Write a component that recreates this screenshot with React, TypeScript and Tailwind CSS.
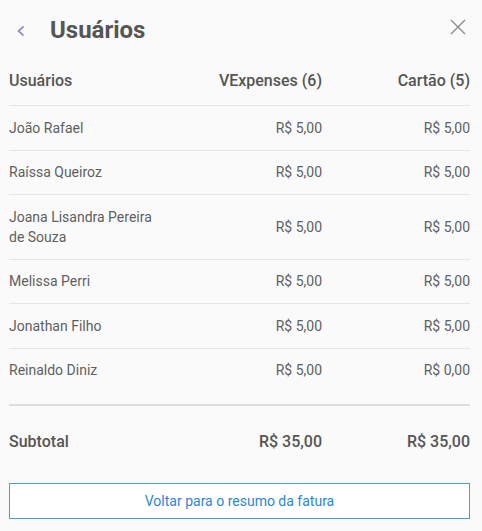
import React from "react";

const rows: { name: string; v: string; c: string }[] = [
  { name: "João Rafael", v: "R$ 5,00", c: "R$ 5,00" },
  { name: "Raíssa Queiroz", v: "R$ 5,00", c: "R$ 5,00" },
  { name: "Joana Lisandra Pereira de Souza", v: "R$ 5,00", c: "R$ 5,00" },
  { name: "Melissa Perri", v: "R$ 5,00", c: "R$ 5,00" },
  { name: "Jonathan Filho", v: "R$ 5,00", c: "R$ 5,00" },
];

export default function App() {
  return (
    <div
      className="w-[482px] h-[531px] bg-[#fafafa] overflow-hidden"
      style={{ fontFamily: "Roboto, 'Liberation Sans', sans-serif" }}
    >
      <div className="flex items-center h-[57px] pl-[14px] pr-[15px]">
        <svg width="14" height="14" viewBox="0 0 14 14" className="mt-[5px]">
          <path d="M9.5 2.5 L4.5 7 L9.5 11.5" fill="none" stroke="#8f91b8" strokeWidth="1.7" />
        </svg>
        <h1 className="ml-[22px] mt-[3px] text-[24px] leading-[28px] font-bold text-[#555]">Usuários</h1>
        <div className="flex-1" />
        <svg width="18" height="18" viewBox="0 0 18 18" className="-mt-[4px]">
          <path d="M2 2 L16 16 M16 2 L2 16" stroke="#8a8a8a" strokeWidth="1.4" />
        </svg>
      </div>
      <div className="px-[9px] w-[479px]">
        <div className="grid grid-cols-[160px_153px_148px] py-[12px] border-b border-[#e6e6e6] text-[16px] leading-[24px] font-medium text-[#555]">
          <div>Usuários</div>
          <div className="text-right">VExpenses (6)</div>
          <div className="text-right">Cartão (5)</div>
        </div>
        {rows.map((r) => (
          <div
            key={r.name}
            className="grid grid-cols-[160px_153px_148px] items-center py-[11.75px] border-b border-[#e6e6e6] text-[14px] leading-[20px] text-[#5f5f5f]"
          >
            <div>{r.name}</div>
            <div className="text-right">{r.v}</div>
            <div className="text-right">{r.c}</div>
          </div>
        ))}
        <div className="grid grid-cols-[160px_153px_148px] items-center pt-[11.75px] pb-[24px] text-[14px] leading-[20px] text-[#5f5f5f]">
          <div>Reinaldo Diniz</div>
          <div className="text-right">R$ 5,00</div>
          <div className="text-right">R$ 0,00</div>
        </div>
        <div className="h-[2px] bg-[#dddddd]" />
        <div className="grid grid-cols-[160px_153px_148px] items-center pt-[24px] pb-[29px] text-[16px] leading-[24px] font-medium text-[#555]">
          <div>Subtotal</div>
          <div className="text-right">R$ 35,00</div>
          <div className="text-right">R$ 35,00</div>
        </div>
        <button className="w-[461px] h-[36px] border border-[#4a9be8] bg-white text-[14px] text-[#2b86dc] flex items-center justify-center">
          Voltar para o resumo da fatura
        </button>
      </div>
    </div>
  );
}
